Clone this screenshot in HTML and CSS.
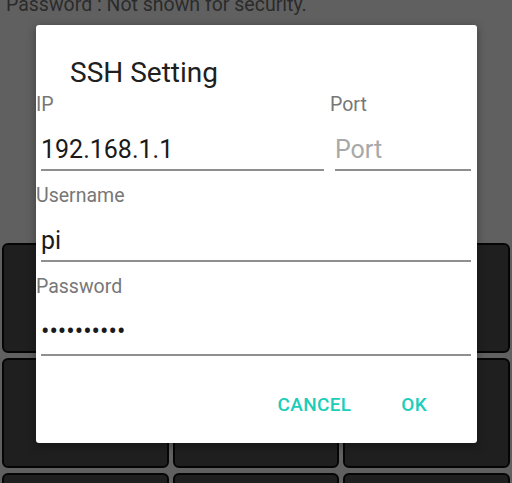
FILE: index.html
```html
<!DOCTYPE html>
<html>
<head>
<meta charset="utf-8">
<link rel="stylesheet" href="styles.css">
</head>
<body>
<div class="screen">
  <div class="info">Password : Not shown for security.</div>
  <div class="pad">
    <div class="key"></div><div class="key"></div><div class="key"></div>
    <div class="key"></div><div class="key"></div><div class="key"></div>
    <div class="key"></div><div class="key"></div><div class="key"></div>
  </div>
  <div class="dialog">
    <div class="title">SSH Setting</div>
    <div class="row">
      <div class="field ip">
        <div class="label">IP</div>
        <div class="input">192.168.1.1</div>
      </div>
      <div class="field port">
        <div class="label">Port</div>
        <div class="input placeholder">Port</div>
      </div>
    </div>
    <div class="field gap">
      <div class="label">Username</div>
      <div class="input">pi</div>
    </div>
    <div class="field gap">
      <div class="label">Password</div>
      <div class="input"><span class="dots">••••••••••</span></div>
    </div>
    <div class="buttons">
      <span class="btn">CANCEL</span>
      <span class="btn">OK</span>
    </div>
  </div>
</div>
</body>
</html>
```

FILE: styles.css
```css
html, body {
  margin: 0;
  padding: 0;
}
body {
  width: 512px;
  height: 483px;
  overflow: hidden;
  background: #606060;
  font-family: Roboto, "Noto Sans", sans-serif;
}
.screen {
  position: relative;
  width: 512px;
  height: 483px;
  overflow: hidden;
}
.info {
  margin-top: -7px;
  padding-left: 6px;
  font-size: 19.5px;
  line-height: 23px;
  color: #2b2b2b;
}
.pad {
  margin-top: 227px;
  padding: 0 2px;
  display: grid;
  grid-template-columns: repeat(3, 1fr);
  grid-auto-rows: 110px;
  column-gap: 4px;
  row-gap: 5px;
}
.key {
  background: #1f1f1f;
  border: 2px solid #050505;
  border-radius: 6px;
}
.dialog {
  position: absolute;
  left: 36px;
  top: 25px;
  width: 441px;
  height: 418px;
  background: #ffffff;
  border-radius: 3px;
  box-shadow: 0 2px 10px rgba(0, 0, 0, 0.35);
  box-sizing: border-box;
  padding-top: 31px;
}
.title {
  padding-left: 34px;
  font-size: 28px;
  line-height: 34px;
  color: #202020;
  margin-bottom: 3px;
}
.row {
  display: flex;
}
.field.ip {
  width: 294px;
}
.field.port {
  flex: 1;
}
.field.gap {
  margin-top: 13px;
}
.label {
  font-size: 19.5px;
  line-height: 23px;
  color: #777777;
}
.input {
  margin: 0 6px 0 5px;
  padding-top: 19px;
  padding-bottom: 4px;
  font-size: 25px;
  line-height: 30px;
  color: #1a1a1a;
  border-bottom: 2px solid #8f8f8f;
  white-space: nowrap;
}
.input.placeholder {
  color: #a8a8a8;
}
.dots {
  vertical-align: 3px;
  letter-spacing: 0;
}
.buttons {
  margin-top: 37px;
  display: flex;
  justify-content: flex-end;
  gap: 50px;
  padding-right: 50px;
}
.btn {
  font-size: 19px;
  line-height: 23px;
  font-weight: 500;
  letter-spacing: 0.3px;
  color: #1ccdb9;
}
```
